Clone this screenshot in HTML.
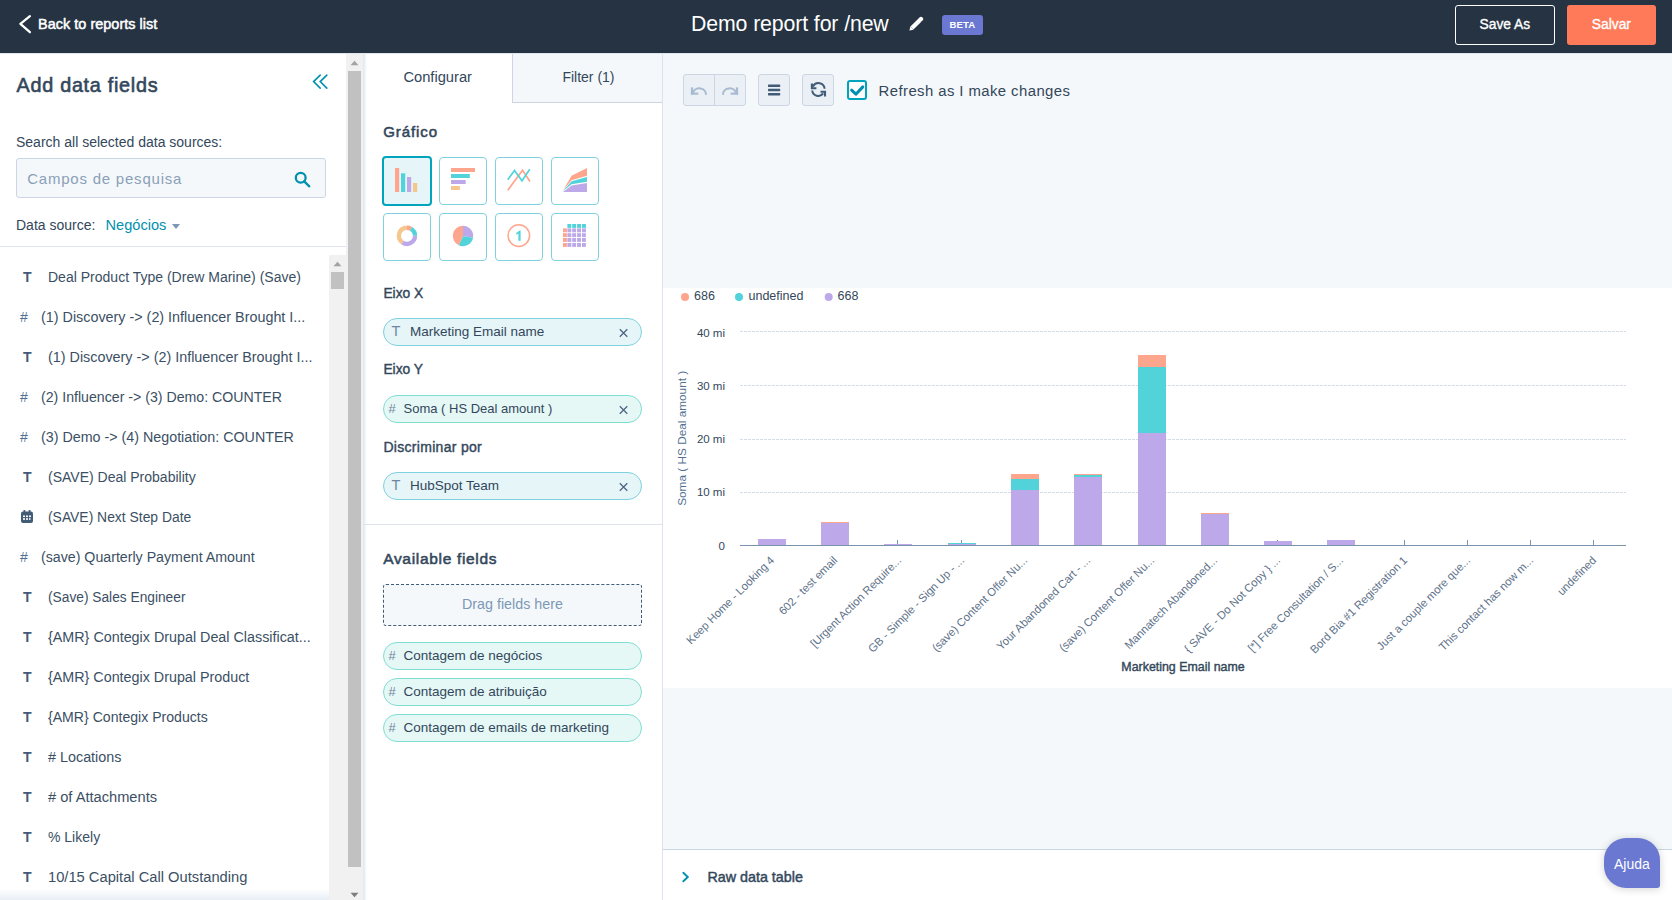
<!DOCTYPE html>
<html><head><meta charset="utf-8">
<style>
*{box-sizing:border-box;margin:0;padding:0}
html,body{width:1672px;height:900px;overflow:hidden;background:#fff;font-family:"Liberation Sans",sans-serif;color:#33475b}
.a{position:absolute;white-space:nowrap}
#hdr{position:absolute;left:0;top:0;width:1672px;height:53px;background:#253342}
.btn{position:absolute;border-radius:3px}
#left{position:absolute;left:0;top:53px;width:363px;height:847px;background:#fff}
.li{position:absolute;left:0;width:329px;height:40px;font-size:14px;line-height:14px}
.li .ic{position:absolute;font-weight:700;font-size:13px;line-height:13px;color:#425b76}
.li .tx{position:absolute;line-height:14px}
#cfg{position:absolute;left:363px;top:53px;width:300px;height:847px;background:#fff}
.chip{position:absolute;left:383px;width:259px;height:28px;border-radius:14px;border:1px solid #7fd1de;background:#e5f5f8}
.chip.g{border-color:#7fded2;background:#e5f8f6}
.chip .ic{position:absolute;color:#7c98b6}
.chip .tx{position:absolute;font-size:13.5px;line-height:14px;color:#33475b}
.gi{position:absolute;width:48px;height:48px;border:1px solid #7fd1de;border-radius:3px;background:#fff}
#main{position:absolute;left:662px;top:53px;width:1010px;height:847px;background:#f5f8fa;border-left:1px solid #dfe3eb}
.lt{font-weight:700;font-size:14px;line-height:14px;color:#425b76}
.lh{font-size:14px;line-height:14px;color:#516f90}
.ltx{font-size:14px;line-height:14px;color:#3b4f64}
</style></head><body>
<div id="hdr">
  <svg class="a" style="left:18px;top:14px" width="16" height="22" viewBox="0 0 16 22"><path d="M11.9 2.2 L2.4 9.9 L11.9 18.2" stroke="#fff" stroke-width="2.3" fill="none" stroke-linecap="round" stroke-linejoin="round"/></svg>
  <div class="a" style="left:38px;top:16.9px;font-size:14.4px;line-height:14.4px;letter-spacing:0.05px;-webkit-text-stroke:0.5px #fff;color:#fff">Back to reports list</div>
  <div class="a" style="left:691px;top:13.9px;font-size:21.3px;line-height:21.3px;letter-spacing:-0.12px;color:#fff">Demo report for /new</div>
  <div class="btn" style="left:942px;top:15px;width:41px;height:20px;background:#6a78d1"></div>
  <div class="a" style="left:942px;top:20.2px;width:41px;text-align:center;font-size:9.6px;line-height:9.6px;font-weight:700;color:#fff;letter-spacing:0.1px">BETA</div>
  <svg class="a" style="left:908px;top:16px" width="16" height="16" viewBox="0 0 16 16"><path d="M1.4 14.6 L2.3 10.5 L5.5 13.7 Z" fill="#fff"/><path d="M3.9 12.1 L11.6 4.4" stroke="#fff" stroke-width="4.3" stroke-linecap="butt"/><path d="M12.2 3.8 L13 3" stroke="#fff" stroke-width="4.3" stroke-linecap="round"/></svg>
  <div class="btn" style="left:1455px;top:5px;width:100px;height:40px;border:1px solid #fff"></div>
  <div class="a" style="left:1479.6px;top:17.8px;font-size:13.8px;line-height:13.8px;-webkit-text-stroke:0.35px #fff;color:#fff">Save As</div>
  <div class="btn" style="left:1567px;top:5px;width:89px;height:40px;background:#ff7a59"></div>
  <div class="a" style="left:1591.8px;top:17.8px;font-size:13.8px;line-height:13.8px;-webkit-text-stroke:0.35px #fff;color:#fff">Salvar</div>
</div>

<div id="left">
</div>
<div class="a" style="left:16.6px;top:76.2px;font-size:19.8px;line-height:19.8px;letter-spacing:0.72px;-webkit-text-stroke:0.6px #33475b;color:#33475b">Add data fields</div>
<svg class="a" style="left:311px;top:73px" width="18" height="18" viewBox="0 0 18 18"><path d="M9.2 2.1 L2.6 8.6 L9.2 15.1 M15.8 2.1 L9.2 8.6 L15.8 15.1" stroke="#0091ae" stroke-width="1.6" fill="none" stroke-linecap="round"/></svg>
<div class="a" style="left:16px;top:134.5px;font-size:14px;line-height:14px">Search all selected data sources:</div>
<div class="a" style="left:16px;top:158px;width:310px;height:40px;background:#f5f8fa;border:1px solid #cbd6e2;border-radius:3px"></div>
<div class="a" style="left:27.2px;top:171.0px;font-size:15px;line-height:15px;letter-spacing:0.78px;color:#89a0b8">Campos de pesquisa</div>
<svg class="a" style="left:292px;top:170px" width="20" height="20" viewBox="0 0 20 20"><circle cx="8.7" cy="7.8" r="4.9" stroke="#0091ae" stroke-width="2.3" fill="none"/><path d="M12.2 11.4 L17.3 16.3" stroke="#0091ae" stroke-width="2.3" stroke-linecap="round"/></svg>
<div class="a" style="left:16px;top:217.8px;font-size:14px;line-height:14px">Data source:</div>
<div class="a" style="left:105.5px;top:217.6px;font-size:14.6px;line-height:14.6px;color:#0091ae">Negócios</div>
<svg class="a" style="left:171px;top:223px" width="10" height="8" viewBox="0 0 10 8"><path d="M1 1 L9 1 L5 6 Z" fill="#7c98b6"/></svg>
<div class="a" style="left:0;top:246px;width:346px;height:1px;background:#dfe3eb"></div>
<div class="a lt" style="left:23px;top:270.1px">T</div>
<div class="a ltx" style="left:48px;top:270.1px;transform:scaleX(1.0012);transform-origin:0 0">Deal Product Type (Drew Marine) (Save)</div>
<div class="a lh" style="left:20px;top:310.1px">#</div>
<div class="a ltx" style="left:40.7px;top:310.1px;transform:scaleX(1.0246);transform-origin:0 0">(1) Discovery -&gt; (2) Influencer Brought I...</div>
<div class="a lt" style="left:23px;top:350.1px">T</div>
<div class="a ltx" style="left:48px;top:350.1px;transform:scaleX(1.0250);transform-origin:0 0">(1) Discovery -&gt; (2) Influencer Brought I...</div>
<div class="a lh" style="left:20px;top:390.1px">#</div>
<div class="a ltx" style="left:40.7px;top:390.1px;transform:scaleX(1.0106);transform-origin:0 0">(2) Influencer -&gt; (3) Demo: COUNTER</div>
<div class="a lh" style="left:20px;top:430.1px">#</div>
<div class="a ltx" style="left:40.7px;top:430.1px;transform:scaleX(1.0203);transform-origin:0 0">(3) Demo -&gt; (4) Negotiation: COUNTER</div>
<div class="a lt" style="left:23px;top:470.1px">T</div>
<div class="a ltx" style="left:48px;top:470.1px;transform:scaleX(1.0007);transform-origin:0 0">(SAVE) Deal Probability</div>
<svg class="a" style="left:21px;top:509.6px" width="12" height="13" viewBox="0 0 12 13"><rect x="0" y="1.5" width="12" height="11.5" rx="2" fill="#425b76"/><rect x="2.5" y="0" width="1.8" height="3" rx="0.6" fill="#425b76"/><rect x="7.7" y="0" width="1.8" height="3" rx="0.6" fill="#425b76"/><g fill="#fff"><rect x="2" y="5.5" width="2" height="1.6"/><rect x="5" y="5.5" width="2" height="1.6"/><rect x="8" y="5.5" width="2" height="1.6"/><rect x="2" y="8.2" width="2" height="1.6"/><rect x="5" y="8.2" width="2" height="1.6"/><rect x="8" y="8.2" width="1.5" height="1.6"/></g></svg>
<div class="a ltx" style="left:48px;top:510.1px;transform:scaleX(0.9916);transform-origin:0 0">(SAVE) Next Step Date</div>
<div class="a lh" style="left:20px;top:550.1px">#</div>
<div class="a ltx" style="left:40.7px;top:550.1px;transform:scaleX(1.0133);transform-origin:0 0">(save) Quarterly Payment Amount</div>
<div class="a lt" style="left:23px;top:590.1px">T</div>
<div class="a ltx" style="left:48px;top:590.1px;transform:scaleX(0.9813);transform-origin:0 0">(Save) Sales Engineer</div>
<div class="a lt" style="left:23px;top:630.1px">T</div>
<div class="a ltx" style="left:48px;top:630.1px;transform:scaleX(1.0231);transform-origin:0 0">{AMR} Contegix Drupal Deal Classificat...</div>
<div class="a lt" style="left:23px;top:670.1px">T</div>
<div class="a ltx" style="left:48px;top:670.1px;transform:scaleX(1.0224);transform-origin:0 0">{AMR} Contegix Drupal Product</div>
<div class="a lt" style="left:23px;top:710.1px">T</div>
<div class="a ltx" style="left:48px;top:710.1px;transform:scaleX(1.0063);transform-origin:0 0">{AMR} Contegix Products</div>
<div class="a lt" style="left:23px;top:750.1px">T</div>
<div class="a ltx" style="left:48px;top:750.1px;transform:scaleX(1.0257);transform-origin:0 0"># Locations</div>
<div class="a lt" style="left:23px;top:790.1px">T</div>
<div class="a ltx" style="left:48px;top:790.1px;transform:scaleX(1.0456);transform-origin:0 0"># of Attachments</div>
<div class="a lt" style="left:23px;top:830.1px">T</div>
<div class="a ltx" style="left:48px;top:830.1px;transform:scaleX(1.0000);transform-origin:0 0">% Likely</div>
<div class="a lt" style="left:23px;top:870.1px">T</div>
<div class="a ltx" style="left:48px;top:870.1px;transform:scaleX(1.0500);transform-origin:0 0">10/15 Capital Call Outstanding</div>
<div class="a" style="left:0;top:889px;width:346px;height:11px;background:linear-gradient(to bottom,rgba(225,233,242,0),rgba(225,233,242,0.75))"></div>
<div class="a" style="left:329px;top:255px;width:17px;height:645px;background:#f1f1f1"></div>
<svg class="a" style="left:333px;top:261px" width="9" height="6" viewBox="0 0 9 6"><path d="M0.5 5.2 L4.5 0.8 L8.5 5.2 Z" fill="#a3a3a3"/></svg>
<div class="a" style="left:331px;top:272px;width:13px;height:17px;background:#c1c1c1"></div>
<div class="a" style="left:346px;top:53px;width:17px;height:847px;background:#f1f1f1"></div>
<svg class="a" style="left:350px;top:60px" width="9" height="6" viewBox="0 0 9 6"><path d="M0.5 5.2 L4.5 0.8 L8.5 5.2 Z" fill="#a3a3a3"/></svg>
<div class="a" style="left:348px;top:71px;width:13px;height:796px;background:#c1c1c1"></div>
<svg class="a" style="left:350px;top:892px" width="9" height="6" viewBox="0 0 9 6"><path d="M0.5 0.8 L4.5 5.2 L8.5 0.8 Z" fill="#7d7d7d"/></svg>

<div id="cfg"></div>
<!--CFG-->
<div class="a" style="left:363px;top:53px;width:4px;height:847px;background:linear-gradient(to right,rgba(203,214,226,0.6),rgba(255,255,255,0))"></div>
<div class="a" style="left:512px;top:53px;width:150px;height:50px;background:#f5f8fa;border-left:1px solid #cbd6e2;border-bottom:1px solid #cbd6e2"></div>
<div class="a" style="left:403.4px;top:70.3px;font-size:14.7px;line-height:14.7px;">Configurar</div>
<div class="a" style="left:562.4px;top:70.1px;font-size:14px;line-height:14px;">Filter (1)</div>
<div class="a" style="left:383.2px;top:124.2px;font-size:15px;line-height:15px;letter-spacing:0.92px;-webkit-text-stroke:0.55px #33475b;color:#33475b">Gráfico</div>
<div class="a" style="left:382px;top:156px;width:50px;height:50px;border:2px solid #00a4bd;border-radius:4px;background:#e5f5f8"></div><svg class="a" style="left:383px;top:157px" width="48" height="48" viewBox="0 0 48 48"><rect x="12" y="11" width="4.2" height="24" fill="#fea58e"/><rect x="18" y="16.3" width="4.2" height="18.7" fill="#51d3d9"/><rect x="24" y="20" width="4.2" height="15" fill="#bda9ea"/><rect x="30" y="26" width="4.2" height="9" fill="#f5c78e"/></svg><div class="a" style="left:439px;top:157px;width:48px;height:48px;border:1px solid #7fd1de;border-radius:4px;background:#fff"></div><svg class="a" style="left:439px;top:157px" width="48" height="48" viewBox="0 0 48 48"><rect x="12" y="11" width="24" height="4" fill="#fea58e"/><rect x="12" y="17" width="18.8" height="4" fill="#51d3d9"/><rect x="12" y="23" width="14.7" height="4" fill="#bda9ea"/><rect x="12" y="29" width="8.9" height="4" fill="#f5c78e"/></svg><div class="a" style="left:495px;top:157px;width:48px;height:48px;border:1px solid #7fd1de;border-radius:4px;background:#fff"></div><svg class="a" style="left:495px;top:157px" width="48" height="48" viewBox="0 0 48 48"><polyline points="12.8,33.2 27.5,13.3 35,24.5" stroke="#fea58e" stroke-width="1.7" fill="none"/><polyline points="12.7,22.8 19.5,13.5 27,23.7 34.8,12.3" stroke="#51d3d9" stroke-width="1.7" fill="none"/></svg><div class="a" style="left:551px;top:157px;width:48px;height:48px;border:1px solid #7fd1de;border-radius:4px;background:#fff"></div><svg class="a" style="left:551px;top:157px" width="48" height="48" viewBox="0 0 48 48"><path d="M12 35 L20.5 28.5 L36 26 L36 35 Z" fill="#bda9ea"/><path d="M12 34.2 L20.5 24.3 L36 20 L36 24.8 L20.5 27.3 Z" fill="#51d3d9"/><path d="M12 33.6 L20.5 18.8 L36 11 L36 18.8 L20.5 23.2 Z" fill="#fea58e"/></svg>
<div class="a" style="left:383px;top:213px;width:48px;height:48px;border:1px solid #7fd1de;border-radius:4px;background:#fff"></div><svg class="a" style="left:383px;top:213px" width="48" height="48" viewBox="0 0 48 48"><path d="M24.00 12.60 A10.2 10.2 0 0 1 29.10 13.97 L26.95 17.69 A5.9 5.9 0 0 0 24.00 16.90 Z" fill="#fea58e"/><path d="M29.10 13.97 A10.2 10.2 0 0 1 34.20 22.80 L29.90 22.80 A5.9 5.9 0 0 0 26.95 17.69 Z" fill="#51d3d9"/><path d="M34.20 22.80 A10.2 10.2 0 0 1 18.15 31.16 L20.62 27.63 A5.9 5.9 0 0 0 29.90 22.80 Z" fill="#bda9ea"/><path d="M18.15 31.16 A10.2 10.2 0 0 1 24.00 12.60 L24.00 16.90 A5.9 5.9 0 0 0 20.62 27.63 Z" fill="#f5c78e"/></svg><div class="a" style="left:439px;top:213px;width:48px;height:48px;border:1px solid #7fd1de;border-radius:4px;background:#fff"></div><svg class="a" style="left:439px;top:213px" width="48" height="48" viewBox="0 0 48 48"><path d="M24 23 L24.00 12.80 A10.2 10.2 0 0 1 34.05 24.77 Z" fill="#bda9ea"/><path d="M24 23 L34.05 24.77 A10.2 10.2 0 0 1 19.69 32.24 Z" fill="#51d3d9"/><path d="M24 23 L19.69 32.24 A10.2 10.2 0 0 1 24.00 12.80 Z" fill="#fea58e"/></svg><div class="a" style="left:495px;top:213px;width:48px;height:48px;border:1px solid #7fd1de;border-radius:4px;background:#fff"></div><svg class="a" style="left:495px;top:213px" width="48" height="48" viewBox="0 0 48 48"><circle cx="23.8" cy="22.6" r="10.8" stroke="#fea58e" stroke-width="1.5" fill="none"/><path d="M21 20.2 L24.6 17.6 L25.6 17.6 L25.6 27.8 L23.4 27.8 L23.4 20.6 L21.6 21.8 Z" fill="#51d3d9"/></svg><div class="a" style="left:551px;top:213px;width:48px;height:48px;border:1px solid #7fd1de;border-radius:4px;background:#fff"></div><svg class="a" style="left:551px;top:213px" width="48" height="48" viewBox="0 0 48 48"><rect x="16.4" y="11" width="3.9" height="3.9" fill="#51d3d9"/><rect x="21.2" y="11" width="3.9" height="3.9" fill="#51d3d9"/><rect x="26.1" y="11" width="3.9" height="3.9" fill="#51d3d9"/><rect x="31.0" y="11" width="3.9" height="3.9" fill="#51d3d9"/><rect x="12" y="15.4" width="3.9" height="3.9" fill="#fea58e"/><rect x="16.4" y="15.4" width="3.9" height="3.9" fill="#bda9ea"/><rect x="21.2" y="15.4" width="3.9" height="3.9" fill="#bda9ea"/><rect x="26.1" y="15.4" width="3.9" height="3.9" fill="#bda9ea"/><rect x="31.0" y="15.4" width="3.9" height="3.9" fill="#bda9ea"/><rect x="12" y="20.2" width="3.9" height="3.9" fill="#fea58e"/><rect x="16.4" y="20.2" width="3.9" height="3.9" fill="#bda9ea"/><rect x="21.2" y="20.2" width="3.9" height="3.9" fill="#bda9ea"/><rect x="26.1" y="20.2" width="3.9" height="3.9" fill="#bda9ea"/><rect x="31.0" y="20.2" width="3.9" height="3.9" fill="#bda9ea"/><rect x="12" y="25.0" width="3.9" height="3.9" fill="#fea58e"/><rect x="16.4" y="25.0" width="3.9" height="3.9" fill="#bda9ea"/><rect x="21.2" y="25.0" width="3.9" height="3.9" fill="#bda9ea"/><rect x="26.1" y="25.0" width="3.9" height="3.9" fill="#bda9ea"/><rect x="31.0" y="25.0" width="3.9" height="3.9" fill="#bda9ea"/><rect x="12" y="30.0" width="3.9" height="3.9" fill="#fea58e"/><rect x="16.4" y="30.0" width="3.9" height="3.9" fill="#bda9ea"/><rect x="21.2" y="30.0" width="3.9" height="3.9" fill="#bda9ea"/><rect x="26.1" y="30.0" width="3.9" height="3.9" fill="#bda9ea"/><rect x="31.0" y="30.0" width="3.9" height="3.9" fill="#bda9ea"/></svg>
<div class="a" style="left:383.4px;top:286.6px;font-size:13.8px;line-height:13.8px;letter-spacing:0px;-webkit-text-stroke:0.4px #33475b">Eixo X</div>
<div class="a" style="left:383px;top:318px;width:259px;height:28px;border-radius:14px;border:1px solid #7fd1de;background:#e5f5f8"></div><div class="a" style="left:391.5px;top:323.8px;font-size:14.5px;line-height:14.5px;color:#6f86a0">T</div><div class="a" style="left:410px;top:324.7px;font-size:13.5px;line-height:13.5px;">Marketing Email name</div><svg class="a" style="left:618px;top:328px" width="10" height="10" viewBox="0 0 10 10"><path d="M1.8 1.2 L9.3 8.8 M9.3 1.2 L1.8 8.8" stroke="#4b6483" stroke-width="1.25"/></svg>
<div class="a" style="left:383.4px;top:363.3px;font-size:13.8px;line-height:13.8px;letter-spacing:0px;-webkit-text-stroke:0.4px #33475b">Eixo Y</div>
<div class="a" style="left:383px;top:395px;width:259px;height:28px;border-radius:14px;border:1px solid #7fded2;background:#e5f8f6"></div><div class="a" style="left:388.5px;top:402.1px;font-size:13px;line-height:13px;color:#6f86a0">#</div><div class="a" style="left:403.5px;top:402.1px;font-size:13px;line-height:13px;">Soma ( HS Deal amount )</div><svg class="a" style="left:618px;top:405px" width="10" height="10" viewBox="0 0 10 10"><path d="M1.8 1.2 L9.3 8.8 M9.3 1.2 L1.8 8.8" stroke="#4b6483" stroke-width="1.25"/></svg>
<div class="a" style="left:383.4px;top:440.1px;font-size:14px;line-height:14px;letter-spacing:0.3px;-webkit-text-stroke:0.4px #33475b">Discriminar por</div>
<div class="a" style="left:383px;top:472px;width:259px;height:28px;border-radius:14px;border:1px solid #7fd1de;background:#e5f5f8"></div><div class="a" style="left:391.5px;top:477.8px;font-size:14.5px;line-height:14.5px;color:#6f86a0">T</div><div class="a" style="left:410px;top:478.7px;font-size:13.5px;line-height:13.5px;">HubSpot Team</div><svg class="a" style="left:618px;top:482px" width="10" height="10" viewBox="0 0 10 10"><path d="M1.8 1.2 L9.3 8.8 M9.3 1.2 L1.8 8.8" stroke="#4b6483" stroke-width="1.25"/></svg>
<div class="a" style="left:363px;top:524px;width:299px;height:1px;background:#dfe3eb"></div>
<div class="a" style="left:383.2px;top:550.9px;font-size:15.5px;line-height:15.5px;letter-spacing:0.68px;-webkit-text-stroke:0.55px #33475b;color:#33475b">Available fields</div>
<div class="a" style="left:383px;top:584px;width:259px;height:42px;background:#f5f8fa;border:1px dashed #425b76;border-radius:3px"></div>
<div class="a" style="left:462px;top:597.2px;font-size:14.3px;line-height:14.3px;color:#7c98b6">Drag fields here</div>
<div class="a" style="left:383px;top:642px;width:259px;height:28px;border-radius:14px;border:1px solid #7fded2;background:#e5f8f6"></div><div class="a" style="left:388.5px;top:649.1px;font-size:13px;line-height:13px;color:#6f86a0">#</div><div class="a" style="left:403.5px;top:648.7px;font-size:13.5px;line-height:13.5px;">Contagem de negócios</div>
<div class="a" style="left:383px;top:678px;width:259px;height:28px;border-radius:14px;border:1px solid #7fded2;background:#e5f8f6"></div><div class="a" style="left:388.5px;top:685.1px;font-size:13px;line-height:13px;color:#6f86a0">#</div><div class="a" style="left:403.5px;top:684.7px;font-size:13.5px;line-height:13.5px;">Contagem de atribuição</div>
<div class="a" style="left:383px;top:714px;width:259px;height:28px;border-radius:14px;border:1px solid #7fded2;background:#e5f8f6"></div><div class="a" style="left:388.5px;top:721.1px;font-size:13px;line-height:13px;color:#6f86a0">#</div><div class="a" style="left:403.5px;top:720.7px;font-size:13.5px;line-height:13.5px;">Contagem de emails de marketing</div>
<!--/CFG-->
<div id="main"></div>
<!--MAIN-->
<div class="a" style="left:683px;top:74px;width:63px;height:32px;background:#eaf0f6;border:1px solid #cbd6e2;border-radius:3px"></div>
<div class="a" style="left:714px;top:74px;width:1px;height:32px;background:#cbd6e2"></div>
<svg class="a" style="left:683px;top:74px" width="63" height="32" viewBox="0 0 63 32"><rect x="7.9" y="13.4" width="2.3" height="7.3" fill="#a9bbd0"/><rect x="7.9" y="18.6" width="7.4" height="2.1" fill="#a9bbd0"/><path d="M10 19 A6.6 6.1 0 0 1 23 20.8" stroke="#a9bbd0" stroke-width="2.1" fill="none"/><rect x="52.8" y="13.4" width="2.3" height="7.3" fill="#a9bbd0"/><rect x="47.7" y="18.6" width="7.4" height="2.1" fill="#a9bbd0"/><path d="M53 19 A6.6 6.1 0 0 0 40 20.8" stroke="#a9bbd0" stroke-width="2.1" fill="none"/></svg>
<div class="a" style="left:758px;top:74px;width:32px;height:32px;background:#eaf0f6;border:1px solid #cbd6e2;border-radius:3px"></div>
<svg class="a" style="left:758px;top:74px" width="32" height="32" viewBox="0 0 32 32"><rect x="10" y="10.6" width="12.2" height="2.4" rx="0.6" fill="#425b76"/><rect x="10" y="14.8" width="12.2" height="2.4" rx="0.6" fill="#425b76"/><rect x="10" y="19" width="12.2" height="2.4" rx="0.6" fill="#425b76"/></svg>
<div class="a" style="left:802px;top:74px;width:32px;height:32px;background:#eaf0f6;border:1px solid #cbd6e2;border-radius:3px"></div>
<svg class="a" style="left:802px;top:74px" width="32" height="32" viewBox="0 0 32 32"><path d="M11 12.6 A6.1 6.1 0 0 1 22.6 14.8" stroke="#425b76" stroke-width="2" fill="none"/><path d="M9.9 9.6 L9.9 14.2 L14.4 14.2" stroke="#425b76" stroke-width="2.1" fill="none" stroke-linejoin="miter"/><path d="M10.2 16.5 A6.1 6.1 0 0 0 21.2 19.4" stroke="#425b76" stroke-width="2" fill="none"/><path d="M23 22.4 L23 17.8 L18.5 17.8" stroke="#425b76" stroke-width="2.1" fill="none" stroke-linejoin="miter"/></svg>
<div class="a" style="left:847px;top:80px;width:20px;height:20px;border:2px solid #00a4bd;border-radius:3px;background:#fff"></div>
<svg class="a" style="left:847px;top:80px" width="20" height="20" viewBox="0 0 20 20"><path d="M4.6 10.2 L8.9 14.2 L15.8 6.9" stroke="#0091ae" stroke-width="3" fill="none" stroke-linecap="round" stroke-linejoin="round"/></svg>
<div class="a" style="left:878.6px;top:83.8px;font-size:14.9px;line-height:14.9px;letter-spacing:0.42px">Refresh as I make changes</div>
<div class="a" style="left:663px;top:288px;width:1009px;height:400px;background:#fff"></div>
<!--CHART--><svg class="a" style="left:0;top:0" width="1672" height="900" viewBox="0 0 1672 900" font-family="Liberation Sans, sans-serif"><line x1="740" y1="331.5" x2="1626" y2="331.5" stroke="#d5dde6" stroke-width="1" stroke-dasharray="3,1"/><line x1="740" y1="385.5" x2="1626" y2="385.5" stroke="#d5dde6" stroke-width="1" stroke-dasharray="3,1"/><line x1="740" y1="439.5" x2="1626" y2="439.5" stroke="#d5dde6" stroke-width="1" stroke-dasharray="3,1"/><line x1="740" y1="492.5" x2="1626" y2="492.5" stroke="#d5dde6" stroke-width="1" stroke-dasharray="3,1"/><text x="725" y="337" text-anchor="end" font-size="11.5" fill="#33475b">40 mi</text><text x="725" y="390.2" text-anchor="end" font-size="11.5" fill="#33475b">30 mi</text><text x="725" y="443.2" text-anchor="end" font-size="11.5" fill="#33475b">20 mi</text><text x="725" y="496.1" text-anchor="end" font-size="11.5" fill="#33475b">10 mi</text><text x="725" y="550.1" text-anchor="end" font-size="11.5" fill="#33475b">0</text><rect x="771" y="540" width="1" height="5" fill="#7a93ae"/><rect x="834" y="540" width="1" height="5" fill="#7a93ae"/><rect x="897" y="540" width="1" height="5" fill="#7a93ae"/><rect x="961" y="540" width="1" height="5" fill="#7a93ae"/><rect x="1024" y="540" width="1" height="5" fill="#7a93ae"/><rect x="1087" y="540" width="1" height="5" fill="#7a93ae"/><rect x="1151" y="540" width="1" height="5" fill="#7a93ae"/><rect x="1214" y="540" width="1" height="5" fill="#7a93ae"/><rect x="1277" y="540" width="1" height="5" fill="#7a93ae"/><rect x="1340" y="540" width="1" height="5" fill="#7a93ae"/><rect x="1404" y="540" width="1" height="5" fill="#7a93ae"/><rect x="1467" y="540" width="1" height="5" fill="#7a93ae"/><rect x="1530" y="540" width="1" height="5" fill="#7a93ae"/><rect x="1593" y="540" width="1" height="5" fill="#7a93ae"/><rect x="758" y="539" width="28" height="6" fill="#bda9ea"/><rect x="821" y="522" width="28" height="1" fill="#fea58e"/><rect x="821" y="523" width="28" height="22" fill="#bda9ea"/><rect x="884" y="544" width="28" height="1" fill="#bda9ea"/><rect x="948" y="543" width="28" height="1" fill="#51d3d9"/><rect x="948" y="544" width="28" height="1" fill="#bda9ea"/><rect x="1011" y="474" width="28" height="5" fill="#fea58e"/><rect x="1011" y="479" width="28" height="11" fill="#51d3d9"/><rect x="1011" y="490" width="28" height="55" fill="#bda9ea"/><rect x="1074" y="474" width="28" height="1" fill="#fea58e"/><rect x="1074" y="475" width="28" height="2" fill="#51d3d9"/><rect x="1074" y="477" width="28" height="68" fill="#bda9ea"/><rect x="1138" y="355" width="28" height="12" fill="#fea58e"/><rect x="1138" y="367" width="28" height="66" fill="#51d3d9"/><rect x="1138" y="433" width="28" height="112" fill="#bda9ea"/><rect x="1201" y="513" width="28" height="1" fill="#fea58e"/><rect x="1201" y="514" width="28" height="31" fill="#bda9ea"/><rect x="1264" y="541" width="28" height="4" fill="#bda9ea"/><rect x="1327" y="540" width="28" height="5" fill="#bda9ea"/><rect x="740" y="545" width="886" height="1" fill="#7a93ae"/><text x="775.0" y="561" text-anchor="end" font-size="11.3" fill="#5d7189" transform="rotate(-45 775.0 561)">Keep Home - Looking 4</text><text x="838.0" y="561" text-anchor="end" font-size="11.3" fill="#5d7189" transform="rotate(-45 838.0 561)">602 - test email</text><text x="902.0" y="561" text-anchor="end" font-size="11.3" fill="#5d7189" transform="rotate(-45 902.0 561)">[Urgent Action Require...</text><text x="965.0" y="561" text-anchor="end" font-size="11.3" fill="#5d7189" transform="rotate(-45 965.0 561)">GB - Simple - Sign Up - ...</text><text x="1028.0" y="561" text-anchor="end" font-size="11.3" fill="#5d7189" transform="rotate(-45 1028.0 561)">(save) Content Offer Nu...</text><text x="1091.0" y="561" text-anchor="end" font-size="11.3" fill="#5d7189" transform="rotate(-45 1091.0 561)">Your Abandoned Cart - ...</text><text x="1155.0" y="561" text-anchor="end" font-size="11.3" fill="#5d7189" transform="rotate(-45 1155.0 561)">(save) Content Offer Nu...</text><text x="1218.0" y="561" text-anchor="end" font-size="11.3" fill="#5d7189" transform="rotate(-45 1218.0 561)">Mannatech Abandoned...</text><text x="1281.0" y="561" text-anchor="end" font-size="11.3" fill="#5d7189" transform="rotate(-45 1281.0 561)">{ SAVE - Do Not Copy } ...</text><text x="1344.0" y="561" text-anchor="end" font-size="11.3" fill="#5d7189" transform="rotate(-45 1344.0 561)">[*] Free Consultation / S...</text><text x="1408.0" y="561" text-anchor="end" font-size="11.3" fill="#5d7189" transform="rotate(-45 1408.0 561)">Bord Bia #1 Registration 1</text><text x="1471.0" y="561" text-anchor="end" font-size="11.3" fill="#5d7189" transform="rotate(-45 1471.0 561)">Just a couple more que...</text><text x="1534.0" y="561" text-anchor="end" font-size="11.3" fill="#5d7189" transform="rotate(-45 1534.0 561)">This contact has now m...</text><text x="1597.0" y="561" text-anchor="end" font-size="11.3" fill="#5d7189" transform="rotate(-45 1597.0 561)">undefined</text><text x="1183" y="670.8" text-anchor="middle" font-size="12.4" fill="#33475b" stroke="#33475b" stroke-width="0.4">Marketing Email name</text><text x="0" y="0" text-anchor="middle" font-size="11.8" fill="#516f90" transform="translate(686.3 438.3) rotate(-90)">Soma ( HS Deal amount )</text><circle cx="685" cy="297" r="4" fill="#fea58e"/><text x="694" y="300.2" font-size="12.5" fill="#33475b">686</text><circle cx="739" cy="297" r="4" fill="#51d3d9"/><text x="748.5" y="300.2" font-size="12.5" fill="#33475b">undefined</text><circle cx="828.7" cy="297" r="4" fill="#bda9ea"/><text x="837.5" y="300.2" font-size="12.5" fill="#33475b">668</text></svg>
<div class="a" style="left:663px;top:849px;width:1009px;height:1px;background:#cbd6e2"></div>
<div class="a" style="left:663px;top:850px;width:1009px;height:50px;background:#fff"></div>
<svg class="a" style="left:681px;top:870px" width="10" height="14" viewBox="0 0 10 14"><path d="M2.3 2.8 L6.8 7 L2.3 11.3" stroke="#0091ae" stroke-width="1.9" fill="none" stroke-linecap="round"/></svg>
<div class="a" style="left:707.5px;top:869.8px;font-size:14.3px;line-height:14.3px;-webkit-text-stroke:0.45px #33475b">Raw data table</div>
<div class="a" style="left:1604px;top:838px;width:56px;height:50px;background:#6a78d1;border-radius:22px 22px 3px 22px;box-shadow:0 1px 8px rgba(0,0,0,0.18)"></div>
<div class="a" style="left:1614px;top:856.6px;font-size:14px;line-height:14px;color:#fff">Ajuda</div>
<!--/MAIN-->
<div class="a" style="left:0;top:53px;width:1672px;height:1px;background:#dfe6ee"></div>
</body></html>
